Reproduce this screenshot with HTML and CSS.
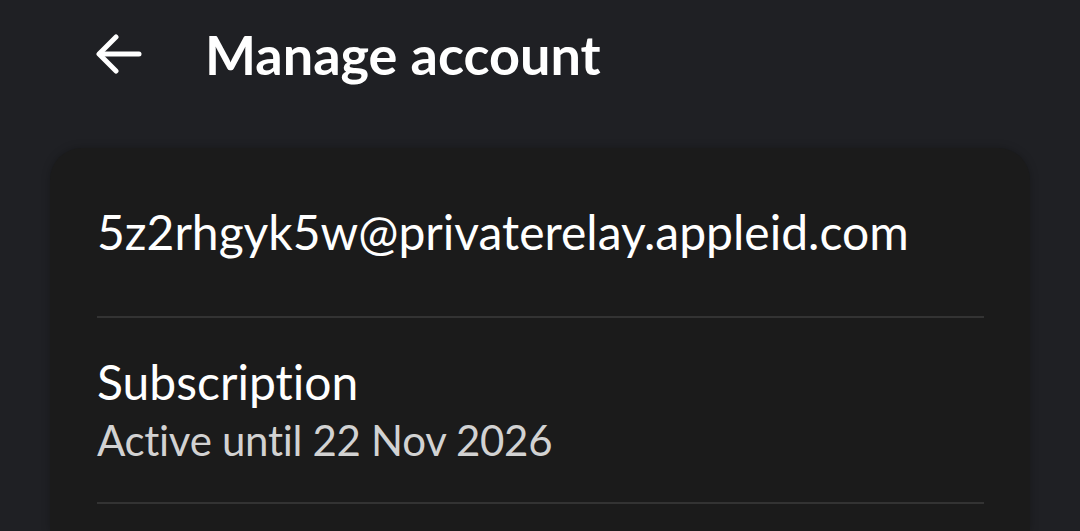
FILE: index.html
```html
<!DOCTYPE html>
<html lang="en">
<head>
    <meta charset="UTF-8">
    <meta name="viewport" content="width=device-width, initial-scale=1.0">
    <title>Manage account</title>
    <link rel="stylesheet" href="styles.css">
</head>
<body>
    <!-- Top bar -->
    <div class="top-bar">
        <button class="back-button" aria-label="Back">
            <svg width="46" height="40" viewBox="0 0 46 40" fill="none" stroke="white" stroke-width="5" stroke-linecap="round" stroke-linejoin="round">
                <path d="M43 20H4"/>
                <path d="M20 3L3 20L20 37"/>
            </svg>
        </button>
        <h1 class="page-title">Manage account</h1>
    </div>

    <!-- Account card -->
    <div class="card">
        <div class="email-row">
            <span class="email">5z2rhgyk5w@privaterelay.appleid.com</span>
        </div>
        <div class="divider"></div>
        <div class="sub-row">
            <div class="row-title">Subscription</div>
            <div class="row-sub">Active until 22 Nov 2026</div>
        </div>
        <div class="divider"></div>
    </div>
</body>
</html>
```

FILE: styles.css
```css
body {
    margin: 0;
    background-color: #1f2024;
    font-family: Lato, "Open Sans", sans-serif;
    font-variant-ligatures: none;
    color: white;
    height: 531px;
    overflow: hidden;
}

/* Top bar */
.top-bar {
    display: flex;
    align-items: center;
    height: 108px;
    padding-left: 96px;
}
.back-button {
    background: none;
    border: none;
    padding: 0;
    display: flex;
    width: 46px;
    height: 40px;
    margin-right: 63px;
    cursor: pointer;
}
.page-title {
    margin: 0;
    font-size: 54px;
    font-weight: 700;
}

/* Card */
.card {
    margin: 40px 50px 0 50px;
    background-color: #1b1b1b;
    border-radius: 32px 32px 0 0;
    padding: 0 46px 0 47px;
    box-shadow: 0 0 8px rgba(0, 0, 0, 0.25);
    height: 383px;
}
.email-row {
    height: 168px;
    box-sizing: border-box;
    padding-top: 55px;
    font-size: 48px;
    line-height: 58px;
}
.sub-row {
    height: 184px;
    box-sizing: border-box;
    padding-top: 35px;
}
.row-title {
    font-size: 48px;
    line-height: 58px;
}
.row-sub {
    font-size: 42px;
    letter-spacing: -0.3px;
    line-height: 58px;
    color: #d2d2d2;
}
.divider {
    height: 2px;
    background-color: #333333;
}
```
